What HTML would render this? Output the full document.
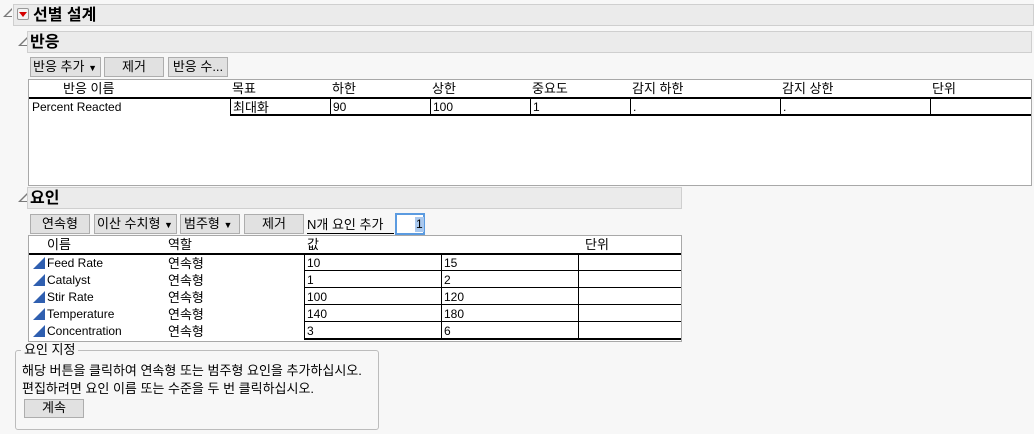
<!DOCTYPE html>
<html><head><meta charset="utf-8"><style>
body{margin:0;width:1034px;height:434px;background:#f7f7f7;font-family:"Liberation Sans","Noto Sans CJK KR",sans-serif;font-size:12px;color:#000;position:relative;overflow:hidden}
.a{position:absolute;white-space:nowrap;line-height:15px}
.k{font-size:13px}
.hdr{position:absolute;background:#ebebeb;border:1px solid #cfcfcf;box-sizing:border-box}
.tri{position:absolute;width:0;height:0;border-left:9px solid transparent;border-bottom:9px solid #7a7a7a}
.tri:after{content:"";position:absolute;left:-6px;top:2px;border-left:6px solid transparent;border-bottom:6px solid #f7f7f7}
.btn{position:absolute;background:#e1e1e1;border:1px solid #adadad;box-sizing:border-box;text-align:center;line-height:17px;font-size:13px}
.box{position:absolute;background:#fff;border:1px solid #a8a8a8;box-sizing:border-box}
.ln{position:absolute;background:#000}
.ft{position:absolute;width:0;height:0;border-left:12px solid transparent;border-bottom:12px solid #2f5fb0}
</style></head><body>
<div class="tri" style="left:3px;top:8px"></div>
<div class="hdr" style="left:13px;top:4px;width:1021px;height:22px"></div>
<div class="a" style="left:17px;top:8px;width:12px;height:12px;border:1px solid #999;background:#f4f4f4;border-radius:2px;box-sizing:border-box"></div>
<div class="a" style="left:19px;top:12px;border-left:4px solid transparent;border-right:4px solid transparent;border-top:5px solid #d40000"></div>
<div class="a" style="left:33px;top:6px;font-size:16px;font-weight:bold;line-height:20px">선별 설계</div>

<div class="tri" style="left:18px;top:37px"></div>
<div class="hdr" style="left:27px;top:31px;width:1005px;height:22px"></div>
<div class="a" style="left:30px;top:33px;font-size:16px;font-weight:bold;line-height:20px">반응</div>

<div class="btn" style="left:30px;top:57px;width:71px;height:20px;text-align:left;padding-left:2px">반응 추가 <span style="font-size:9px">▼</span></div>
<div class="btn" style="left:104px;top:57px;width:60px;height:20px">제거</div>
<div class="btn" style="left:168px;top:57px;width:60px;height:20px">반응 수...</div>

<div class="box" style="left:28px;top:79px;width:1004px;height:107px"></div>
<div class="a k" style="left:63px;top:81px">반응 이름</div>
<div class="a k" style="left:232px;top:81px">목표</div>
<div class="a k" style="left:332px;top:81px">하한</div>
<div class="a k" style="left:432px;top:81px">상한</div>
<div class="a k" style="left:532px;top:81px">중요도</div>
<div class="a k" style="left:632px;top:81px">감지 하한</div>
<div class="a k" style="left:782px;top:81px">감지 상한</div>
<div class="a k" style="left:932px;top:81px">단위</div>
<div class="ln" style="left:29px;top:97px;width:1002px;height:2px"></div>
<div class="ln" style="left:230px;top:114px;width:801px;height:2px"></div>
<div class="ln" style="left:230px;top:97px;width:1px;height:19px"></div>
<div class="ln" style="left:330px;top:97px;width:1px;height:19px"></div>
<div class="ln" style="left:430px;top:97px;width:1px;height:19px"></div>
<div class="ln" style="left:530px;top:97px;width:1px;height:19px"></div>
<div class="ln" style="left:630px;top:97px;width:1px;height:19px"></div>
<div class="ln" style="left:780px;top:97px;width:1px;height:19px"></div>
<div class="ln" style="left:930px;top:97px;width:1px;height:19px"></div>
<div class="a" style="left:32px;top:100px">Percent Reacted</div>
<div class="a k" style="left:233px;top:100px">최대화</div>
<div class="a" style="left:333px;top:100px">90</div>
<div class="a" style="left:433px;top:100px">100</div>
<div class="a" style="left:533px;top:100px">1</div>
<div class="a" style="left:633px;top:100px">.</div>
<div class="a" style="left:783px;top:100px">.</div>

<div class="tri" style="left:18px;top:193px"></div>
<div class="hdr" style="left:27px;top:187px;width:655px;height:22px"></div>
<div class="a" style="left:30px;top:189px;font-size:16px;font-weight:bold;line-height:20px">요인</div>

<div class="btn" style="left:30px;top:214px;width:60px;height:20px">연속형</div>
<div class="btn" style="left:94px;top:214px;width:83px;height:20px;text-align:left;padding-left:2px">이산 수치형 <span style="font-size:9px">▼</span></div>
<div class="btn" style="left:180px;top:214px;width:60px;height:20px;text-align:left;padding-left:3px">범주형 <span style="font-size:9px">▼</span></div>
<div class="btn" style="left:244px;top:214px;width:60px;height:20px">제거</div>
<div class="a k" style="left:307px;top:217px">N개 요인 추가</div>
<div class="ln" style="left:307px;top:233px;width:87px;height:1px"></div>
<div class="a" style="left:395px;top:213px;width:30px;height:22px;border:2px solid #5b9be0;box-sizing:border-box;background:#fff"></div>
<div class="a" style="left:415px;top:217px;background:#a9c8ee;padding:0 1px">1</div>

<div class="box" style="left:28px;top:235px;width:654px;height:107px"></div>
<div class="a k" style="left:47px;top:237px">이름</div>
<div class="a k" style="left:168px;top:237px">역할</div>
<div class="a k" style="left:307px;top:237px">값</div>
<div class="a k" style="left:585px;top:237px">단위</div>
<div class="ln" style="left:29px;top:253px;width:652px;height:2px"></div>
<div class="ln" style="left:304px;top:270px;width:377px;height:1px"></div>
<div class="ln" style="left:304px;top:287px;width:377px;height:1px"></div>
<div class="ln" style="left:304px;top:304px;width:377px;height:1px"></div>
<div class="ln" style="left:304px;top:321px;width:377px;height:1px"></div>
<div class="ln" style="left:304px;top:338px;width:377px;height:2px"></div>
<div class="ln" style="left:304px;top:253px;width:1px;height:87px"></div>
<div class="ln" style="left:441px;top:253px;width:1px;height:87px"></div>
<div class="ln" style="left:578px;top:253px;width:1px;height:87px"></div>

<div class="ft" style="left:33px;top:257px"></div><div class="a" style="left:47px;top:256px">Feed Rate</div><div class="a k" style="left:168px;top:256px">연속형</div><div class="a" style="left:307px;top:256px">10</div><div class="a" style="left:444px;top:256px">15</div>
<div class="ft" style="left:33px;top:274px"></div><div class="a" style="left:47px;top:273px">Catalyst</div><div class="a k" style="left:168px;top:273px">연속형</div><div class="a" style="left:307px;top:273px">1</div><div class="a" style="left:444px;top:273px">2</div>
<div class="ft" style="left:33px;top:291px"></div><div class="a" style="left:47px;top:290px">Stir Rate</div><div class="a k" style="left:168px;top:290px">연속형</div><div class="a" style="left:307px;top:290px">100</div><div class="a" style="left:444px;top:290px">120</div>
<div class="ft" style="left:33px;top:308px"></div><div class="a" style="left:47px;top:307px">Temperature</div><div class="a k" style="left:168px;top:307px">연속형</div><div class="a" style="left:307px;top:307px">140</div><div class="a" style="left:444px;top:307px">180</div>
<div class="ft" style="left:33px;top:325px"></div><div class="a" style="left:47px;top:324px">Concentration</div><div class="a k" style="left:168px;top:324px">연속형</div><div class="a" style="left:307px;top:324px">3</div><div class="a" style="left:444px;top:324px">6</div>

<div class="a" style="left:15px;top:350px;width:364px;height:80px;border:1px solid #bcbcbc;border-radius:3px;box-sizing:border-box"></div>
<div class="a k" style="left:21px;top:342px;background:#f7f7f7;padding:0 3px">요인 지정</div>
<div class="a k" style="left:22px;top:363px">해당 버튼을 클릭하여 연속형 또는 범주형 요인을 추가하십시오.</div>
<div class="a k" style="left:22px;top:381px">편집하려면 요인 이름 또는 수준을 두 번 클릭하십시오.</div>
<div class="btn" style="left:24px;top:399px;width:60px;height:19px;line-height:16px">계속</div>
</body></html>
